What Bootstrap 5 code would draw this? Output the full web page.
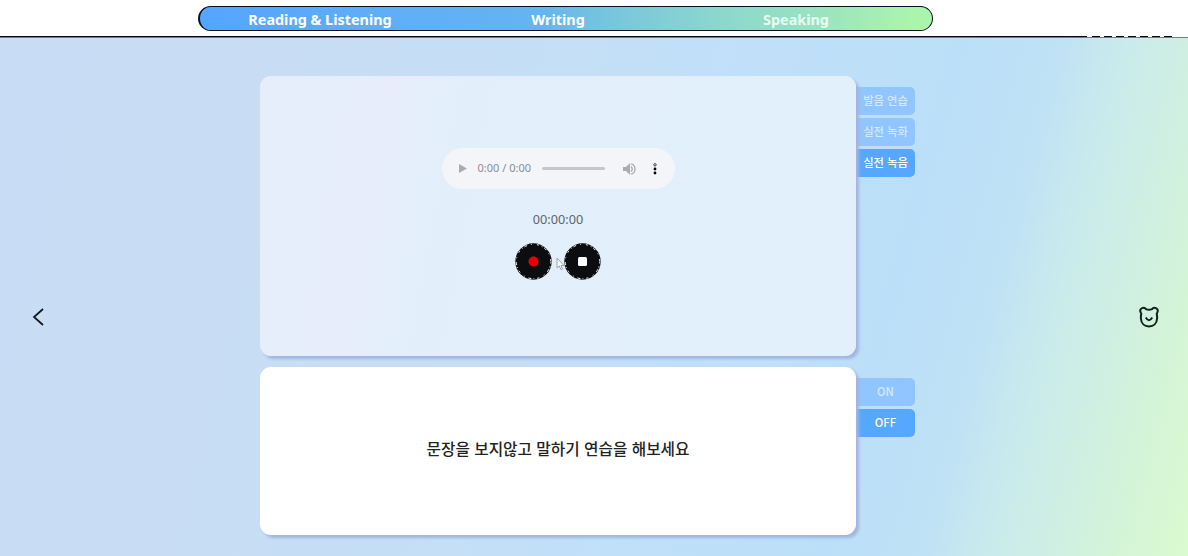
<!DOCTYPE html>
<html lang="ko">
<head>
<meta charset="utf-8">
<meta name="viewport" content="width=device-width, initial-scale=1">
<title>Speaking</title>
<link href="https://cdn.jsdelivr.net/npm/bootstrap@5.3.0/dist/css/bootstrap.min.css" rel="stylesheet">
<style>
body{height:100vh;overflow:hidden;font-family:"Noto Sans","Noto Sans CJK KR",sans-serif;color:#222}
.top-bar{height:38px;padding:6px 0 0 198px;border-bottom:1px solid #777b84;background:linear-gradient(#050811,#050811) 0 36px/1087px 1px no-repeat,repeating-linear-gradient(90deg,#050811 0 8px,#fff 8px 12px) 1092px 36px/83px 1px no-repeat,#fff}
.steps{width:735px;height:25px;border:solid #061020;border-width:1px 1px 1px 2px;border-radius:13px;padding:0 15px 0 1px;background:linear-gradient(90deg,#54a5ff 0,#62b1f5 35%,#64b5ef 47%,#74c3df 54%,#8bd6cf 70%,#98e1c3 83%,#abf4ac 97%)}
.steps a{width:238px;font-size:14.4px;font-weight:700;line-height:25px;color:#fff;text-align:center;text-decoration:none}
.steps a:last-child{color:#e9fff4}
.stage{height:calc(100vh - 38px);display:grid;grid-template-columns:260px 596px 59px 1fr;background:linear-gradient(105deg,#c9dcf5 0,#c8ddf4 20%,#c4dff6 45%,#c0e0fa 58%,#bbdff8 73%,#bfe2f5 80%,#caebec 85%,#cfefe2 90%,#d5f5d7 95%,#dafacf 100%)}
.panel{border-radius:11px;box-shadow:3px 3px 3px #a3b5df;position:relative;z-index:1}
.rec-panel{height:280px;background:linear-gradient(101deg,#e5edfb 0,#e7edfb 21%,#e2effb 31%,#e2f0fc 100%)}
.say-panel{height:168px;background:#fff;font:500 15.7px "Noto Sans CJK KR",sans-serif;padding-bottom:6px}
.player{width:233px;height:41px;border-radius:21px;background:#f3f5f9;margin-top:72px;padding:0 16px 0 16px;font-size:11px;color:#8b8d90}
.track{width:63px;height:3px;border-radius:2px;background:#c5c6c8}
.timer{font-size:12.7px;line-height:18px;color:#606468;margin-top:21px}
.pointer{left:296px;top:181px}
.tab{height:28px;font:500 11.3px/26px "Noto Sans CJK KR",sans-serif;border:0;padding:0 0 2px;border-radius:0 5px 5px 0;color:#d5e8ff;background:#91c5ff}
.tab.active{background:#55a7ff;color:#fff}
</style>
</head>
<body>
<header class="top-bar"><nav class="steps d-flex"><a href="#">Reading &amp; Listening</a><a href="#">Writing</a><a href="#">Speaking</a></nav></header>
<main class="stage">
  <div class="d-flex align-items-center ps-4" style="padding-top:40px"><svg class="ms-2" width="14" height="20" viewBox="0 0 14 20" fill="none" stroke="#10141c" stroke-width="1.7"><path d="M11 2 2 10l9 8"/></svg></div>
  <div class="d-flex flex-column" style="padding-top:38px;gap:11px">
    <section class="panel rec-panel d-flex flex-column align-items-center">
      <div class="player d-flex align-items-center">
        <svg width="10" height="11" viewBox="0 0 10 11"><path fill="#aaabad" d="M1 1v9l8-4.5z"/></svg>
        <span class="text-nowrap" style="margin-left:10px;width:54px">0:00 / 0:00</span>
        <span class="track" style="margin-left:10px"></span>
        <svg style="margin-left:18px" width="13" height="12" viewBox="0 0 13 12"><path d="M0 4h3l4-4v12L3 8H0z" fill="#aaabad"/><path d="M8 3.5q2.5 2.5 0 5M8 .8c5.3 1.2 5.3 9.2 0 10.4" fill="none" stroke="#aaabad" stroke-width="1.3"/></svg>
        <svg class="ms-auto" width="8" height="12" viewBox="0 0 8 12"><circle cx="4" cy="1.8" r="1.2" fill="#fff" stroke="#111" stroke-width=".8"/><circle cx="4" cy="6" r="1.4"/><circle cx="4" cy="10" r="1.4"/></svg>
      </div>
      <div class="timer">00:00:00</div>
      <div class="d-flex" style="gap:12px;margin-top:15px">
        <svg width="37" height="37" viewBox="0 0 37 37"><circle cx="18.500" cy="18.500" r="18.200" fill="#0b0d10"/><circle cx="18.500" cy="18.500" r="17.200" fill="none" stroke="#fff" stroke-dasharray="2 3 1 2 3 4 1 5"/><circle cx="18.500" cy="18.500" r="5" fill="#e80000"/></svg>
        <svg width="37" height="37" viewBox="0 0 37 37"><circle cx="18.500" cy="18.500" r="18.200" fill="#0b0d10"/><circle cx="18.500" cy="18.500" r="17.200" fill="none" stroke="#fff" stroke-dasharray="2 3 1 2 3 4 1 5"/><rect x="14" y="14" width="9" height="9" rx="1.500" fill="#fff"/></svg>
      </div>
      <svg class="pointer position-absolute" width="9" height="14" viewBox="0 0 9 14"><path d="M1 1v10l2.3-2 1.7 3.7 1.6-.8L5 8.500h3z" fill="#f6f8fa" stroke="#9da5ac"/></svg>
    </section>
    <section class="panel say-panel d-flex align-items-center justify-content-center">문장을 보지않고 말하기 연습을 해보세요</section>
  </div>
  <div class="d-flex flex-column" style="padding-top:49px;gap:3px">
    <button class="tab">발음 연습</button><button class="tab">실전 녹화</button><button class="tab active">실전 녹음</button>
    <button class="tab" style="margin-top:198px">ON</button><button class="tab active">OFF</button>
  </div>
  <div class="d-flex align-items-center justify-content-end" style="padding:40px 28px 0 0"><svg width="22" height="22" viewBox="0 0 22 22" fill="none" stroke="#10201e" stroke-width="2"><path d="M8 3.100Q11 4.300 14 3.100C15.800.3 20.800 2.200 19.600 5.800 19.400 6.600 18.900 7.100 18.700 7.900 19.200 9.500 19.200 11 19.100 12.500 18.800 17.500 15.500 20.400 11 20.400S3.200 17.500 2.900 12.500C2.800 11 2.800 9.500 3.300 7.900 3.100 7.100 2.600 6.600 2.400 5.800 1.200 2.200 6.200.3 8 3.100zM7.800 11.500Q11 17 14.200 11.500"/></svg></div>
</main>
<script src="https://cdn.jsdelivr.net/npm/bootstrap@5.3.0/dist/js/bootstrap.bundle.min.js"></script>
</body>
</html>
